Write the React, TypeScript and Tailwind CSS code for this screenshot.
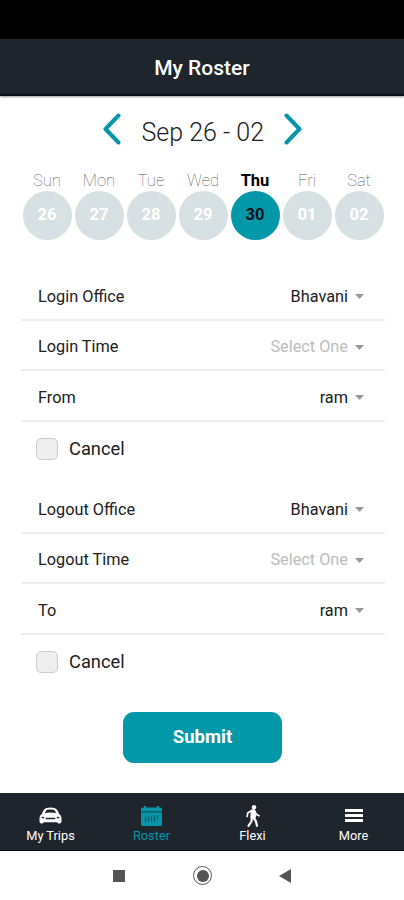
const days = [
    { name: "Sun", date: "26" },
    { name: "Mon", date: "27" },
    { name: "Tue", date: "28" },
    { name: "Wed", date: "29" },
    { name: "Thu", date: "30", active: true },
    { name: "Fri", date: "01" },
    { name: "Sat", date: "02" }
];

const sections = [
    [
        { label: "Login Office", value: "Bhavani" },
        { label: "Login Time", value: "" },
        { label: "From", value: "ram" }
    ],
    [
        { label: "Logout Office", value: "Bhavani" },
        { label: "Logout Time", value: "" },
        { label: "To", value: "ram" }
    ]
];

function CarIcon() {
    return (
        <svg width="23" height="17" viewBox="0 0 23 17">
            <path
                d="M2.800 7Q4.500 2.200 7.500 1Q11.500-.2 15.500 1Q18.500 2.200 20.200 7Q22.500 8.500 22.500 11v3.500q0 2-2 2q-2 0-2.300-1.200H4.800q-.3 1.200-2.300 1.200q-2 0-2-2V11q0-2.500 2.300-4z"
                fill="currentColor"
            />
            <path d="M5.800 6Q7 3.200 8.300 2.800q3.200-.5 6.400 0Q16 3.200 17.200 6q-5.700-.9-11.400 0z" fill="#1e252d" />
            <path d="M7.500 11.500h8" stroke="#1e252d" strokeWidth="1.700" strokeLinecap="round" />
            <path d="M3 10.300l1.800.6M20 10.300l-1.800.6" stroke="#1e252d" strokeWidth="1.200" strokeLinecap="round" />
        </svg>
    );
}

function CalendarIcon() {
    return (
        <svg width="21" height="20" viewBox="0 0 21 20" fill="currentColor">
            <path d="M0 5.500V3.200Q0 1.500 1.700 1.500H3V0h2v1.500h11V0h2v1.500h1.300Q21 1.500 21 3.200v2.300z" />
            <path d="M0 6.300h21v12q0 1.700-1.700 1.700H1.700Q0 20 0 18.300z" />
            <path d="M4.500 10.500v5.500M7.500 10.500v5.500M10.500 10v6M13.500 9v7M16.500 9v4.500" stroke="#1e252d" strokeWidth="1.200" opacity=".5" />
        </svg>
    );
}

function WalkIcon() {
    return (
        <svg width="14" height="22" viewBox="0 0 14 22" fill="none" stroke="currentColor" strokeLinecap="round" strokeLinejoin="round">
            <circle cx="8" cy="2.300" r="2.200" fill="currentColor" stroke="none" />
            <path d="M5.500 5.300L8.300 5l1 4-.4 4.500-3.700-.5z" fill="currentColor" strokeWidth="1.600" />
            <path d="M5.500 5.800L1.700 8l-.5 3.500" strokeWidth="1.700" />
            <path d="M8.800 6.500l1.700 3 2.500 1.300" strokeWidth="1.700" />
            <path d="M6 12.500l-.6 4L2.500 20.800" strokeWidth="2.200" />
            <path d="M7.500 13l2.300 3 1.200 4.800" strokeWidth="2.200" />
        </svg>
    );
}

function MenuIcon() {
    return (
        <svg width="18" height="13" viewBox="0 0 18 13" fill="currentColor">
            <path d="M0 0h18v3H0zM0 5h18v3H0zM0 10h18v3H0z" />
        </svg>
    );
}

const tabs = [
    { label: "My Trips", icon: <CarIcon /> },
    { label: "Roster", icon: <CalendarIcon />, active: true },
    { label: "Flexi", icon: <WalkIcon /> },
    { label: "More", icon: <MenuIcon /> }
];

function Chevron({ flip = false }: { flip?: boolean }) {
    return (
        <svg width="18" height="32" viewBox="0 0 18 32" fill="none" className={flip ? "-scale-x-100" : ""}>
            <path d="M15.500 2.500L2.500 16l13 13.500" stroke="#0796a9" strokeWidth="4" strokeLinecap="round" strokeLinejoin="round" />
        </svg>
    );
}

export default function App() {
    return (
        <div className="flex h-[900px] w-[404px] flex-col overflow-hidden bg-white font-['Roboto',sans-serif] text-[#202020]">
            <div className="h-[39px] shrink-0 bg-black" />
            <header className="flex h-[57px] shrink-0 items-center justify-center border-b-2 border-[#0b1019] bg-[#1e252d] pt-[4px] text-[21px] font-medium text-white shadow-[0_1px_2px_rgba(0,0,0,0.4)]">
                My Roster
            </header>

            <div className="mt-[15px] flex h-9 shrink-0 items-center justify-center gap-5">
                <Chevron />
                <div className="w-[123px] pt-2 pl-px text-center text-[25px] leading-[30px] font-light whitespace-nowrap">Sep 26 - 02</div>
                <Chevron flip />
            </div>

            <div className="mt-[24px] ml-[21px] grid w-[364px] shrink-0 grid-cols-7">
                {days.map(d => (
                    <div key={d.name} className="flex flex-col items-center">
                        <div className={`h-[19.500px] text-[16.500px] leading-[20px] ${d.active ? "font-bold text-black" : "font-thin text-[#555]"}`}>
                            {d.name}
                        </div>
                        <div className={`flex size-[49px] items-center justify-center rounded-full text-[16.500px] font-bold ${d.active ? "bg-[#0397aa] text-[#101010]" : "bg-[#d7e0e2] text-white"}`}>
                            {d.date}
                        </div>
                    </div>
                ))}
            </div>

            <main className="mt-[30.500px] ml-[21px] w-[364px] shrink-0">
                {sections.map(rows => (
                    <section key={rows[0].label} className="h-[213px]">
                        {rows.map(r => (
                            <div key={r.label} className="flex h-[50.500px] items-center justify-between border-b-2 border-[#eeeeee] pt-[5px] pr-[21px] pl-[17px] text-[16.300px]">
                                <span>{r.label}</span>
                                <span className="flex items-center gap-[7px]">
                                    <span className={r.value ? "" : "text-[#bcbcbc]"}>{r.value || "Select One"}</span>
                                    <svg width="9" height="5" viewBox="0 0 9 5" fill="#999">
                                        <path d="M0 0h9L4.500 5z" />
                                    </svg>
                                </span>
                            </div>
                        ))}
                        <div className="flex h-[55px] items-center gap-[11px] pl-[15px]">
                            <span className="size-[22px] rounded-[5px] border border-[#cccccc] bg-[#eeeeee]" />
                            <span className="text-[18.300px] leading-5">Cancel</span>
                        </div>
                    </section>
                ))}
            </main>

            <button className="mt-[16px] ml-[123px] h-[51px] w-[159px] shrink-0 rounded-[11px] bg-[#0397aa] pt-px text-[18.500px] font-bold text-white">
                Submit
            </button>

            <nav className="mt-auto grid h-[58px] shrink-0 grid-cols-4 border-b border-black bg-[#1e252d] text-white">
                {tabs.map(t => (
                    <div key={t.label} className={`flex flex-col items-center pt-[10px] ${t.active ? "text-[#0796a9]" : ""}`}>
                        <div className="flex h-[25px] items-center justify-center">{t.icon}</div>
                        <div className="text-[12.800px] leading-4">{t.label}</div>
                    </div>
                ))}
            </nav>

            <div className="flex h-[49px] shrink-0 items-center justify-center text-[#555]">
                <div className="size-3 bg-current" />
                <div className="ml-[68px] flex size-[19px] items-center justify-center rounded-full border-[1.500px] border-current">
                    <div className="size-3 rounded-full bg-current" />
                </div>
                <svg width="12" height="14" viewBox="0 0 12 14" fill="currentColor" className="ml-[67px]">
                    <path d="M0 7L12 0v14z" />
                </svg>
            </div>
        </div>
    );
}
